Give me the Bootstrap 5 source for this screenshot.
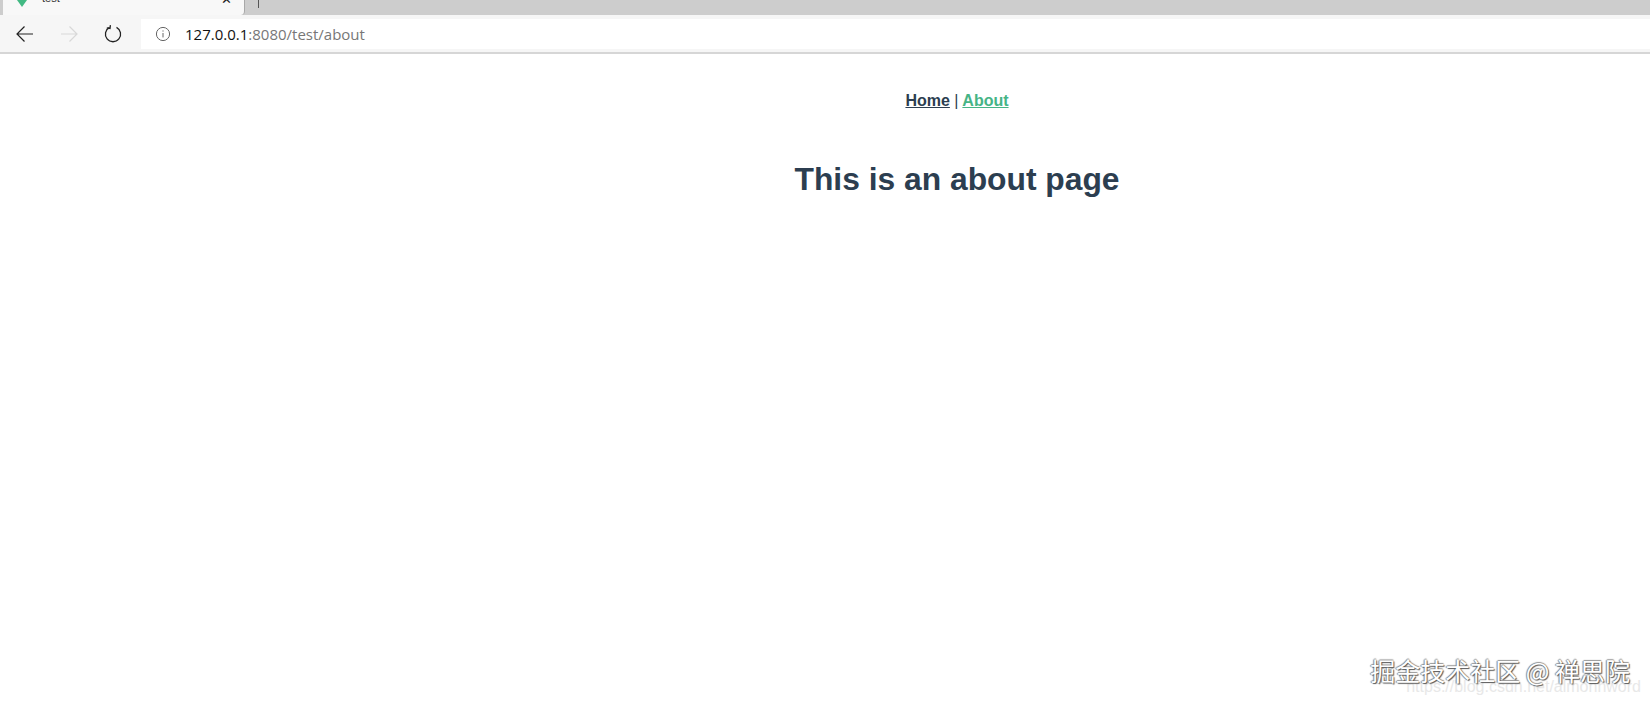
<!DOCTYPE html>
<html lang="en">
<head>
<meta charset="utf-8">
<title>test</title>
<link rel="stylesheet" href="https://cdn.jsdelivr.net/npm/bootstrap@5.3.0/dist/css/bootstrap.min.css">
<style>
html,body{height:705px;overflow:hidden;background:#fff}
body{font-family:"Liberation Sans",Arial,sans-serif;color:#2c3e50;position:relative}
.tabstrip{height:15px;background:#cdcdcd;overflow:hidden}
.tab-live{width:242px;height:15px;background:#f8f8f8;margin-left:3px;padding-left:13px;border-right:1px solid #a8a8a8;border-bottom-right-radius:4px}
.tab-title{font-size:11px;color:#333;line-height:1;margin-top:-7px;margin-left:14px}
.tab-x{font-size:13px;color:#222;line-height:1;margin-top:-7px;margin-right:12px}
.tab-sep{width:1px;height:8px;background:#555;margin-left:13px}
.toolbar{height:39px;background:#f6f6f6;border-bottom:2px solid #d6d6d6;padding:4px 0 3px 0}
.navzone{width:141px;padding-left:15px;gap:24px}
.addr{height:30px;background:#fff;font-family:"Open Sans","Liberation Sans",sans-serif;font-size:15px;color:#777;padding-left:14px;gap:14px}
.addr b{font-weight:400;color:#111}
.main-stack{text-align:center;padding-left:264px}
.nav-line{padding-top:35px;font-size:16px;font-weight:700;line-height:24px;height:62px;color:#2c3e50}
.nav-line span{font-weight:400}
.nav-line a{color:#2c3e50;text-decoration:underline}
.nav-line a.on{color:#46b486}
.about-title{font-size:31.8px;font-weight:700;line-height:38px;margin:0;padding-top:44px;color:#2c3e50}
.mark-wm{position:absolute;right:20px;top:654px;font-family:"Noto Sans CJK SC",sans-serif;font-size:25px;line-height:32px;color:#fff;white-space:nowrap;text-shadow:1px 1px 1px #555,-1px 0 1px #888,0 -1px 1px #999}
.mark-url{position:absolute;right:9px;top:677px;font-size:16px;line-height:20px;color:#e8e8e8;white-space:nowrap}
</style>
</head>
<body>
<div class="tabstrip d-flex">
  <div class="tab-live d-flex align-items-start justify-content-between">
    <div class="d-flex align-items-start">
      <svg width="12" height="7" viewBox="0 0 12 7"><path d="M1 0h10L6 7z" fill="#42b983"/></svg>
      <div class="tab-title">test</div>
    </div>
    <div class="tab-x">✕</div>
  </div>
  <div class="tab-sep"></div>
</div>
<div class="toolbar d-flex">
  <div class="navzone d-flex align-items-center">
    <svg width="20" height="20" viewBox="0 0 20 20" fill="none" stroke="#222" stroke-width="1.2"><path d="M18 10H2M9.5 2.5 2 10l7.5 7.5"/></svg>
    <svg width="20" height="20" viewBox="0 0 20 20" fill="none" stroke="#d8d8d8" stroke-width="1.2"><path d="M2 10h16M10.5 2.5 18 10l-7.5 7.5"/></svg>
    <svg width="20" height="20" viewBox="0 0 20 20" fill="none" stroke="#222" stroke-width="1.3"><path d="M6.5 3.4a7.6 7.6 0 1 0 7 0"/><path d="M7.4 1.2 7 4.4 3.8 3.8"/></svg>
  </div>
  <div class="addr flex-grow-1 d-flex align-items-center">
    <svg width="16" height="16" viewBox="0 0 16 16" fill="none" stroke="#666"><circle cx="8" cy="8" r="6.6"/><path d="M8 7v4.4M8 4.4v1.2"/></svg>
    <div><b>127.0.0.1</b>:8080/test/about</div>
  </div>
</div>
<div class="main-stack">
  <div class="nav-line"><a href="#">Home</a> <span>|</span> <a class="on" href="#">About</a></div>
  <h1 class="about-title">This is an about page</h1>
</div>
<div class="mark-url">https://blog.csdn.net/almonhword</div>
<div class="mark-wm">掘金技术社区 @ 禅思院</div>
<script src="https://cdn.jsdelivr.net/npm/bootstrap@5.3.0/dist/js/bootstrap.bundle.min.js"></script>
</body>
</html>
